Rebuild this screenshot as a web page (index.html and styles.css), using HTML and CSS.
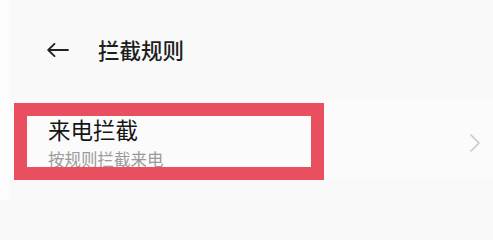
FILE: index.html
```html
<!DOCTYPE html>
<html lang="zh">
<head>
<meta charset="utf-8">
<link rel="stylesheet" href="styles.css">
</head>
<body>
  <header class="topbar">
    <svg class="back" width="22" height="14" viewBox="0 0 22 14">
      <path d="M21 7H1.2M7.5 0.8L1.2 7l6.3 6.2" fill="none" stroke="#222" stroke-width="1.8" stroke-linecap="round" stroke-linejoin="round"/>
    </svg>
    <h1 class="title">拦截规则</h1>
  </header>
  <div class="item">
    <div class="texts">
      <div class="item-title">来电拦截</div>
      <div class="item-sub">按规则拦截来电</div>
    </div>
    <svg class="chev" width="10" height="18" viewBox="0 0 10 18">
      <path d="M1 1l8 8-8 8" fill="none" stroke="#c6c6c6" stroke-width="1.5" stroke-linecap="round" stroke-linejoin="round"/>
    </svg>
    <div class="highlight"></div>
  </div>
</body>
</html>
```
FILE: styles.css
```css
html, body {
  margin: 0;
  padding: 0;
}
body {
  width: 493px;
  height: 200px;
  background: #f9f9f9;
  font-family: "Noto Sans CJK SC", "Noto Sans", sans-serif;
  overflow: hidden;
  border-left: 9px solid #fdfdfd;
  box-sizing: border-box;
}
.topbar {
  height: 100px;
  display: flex;
  align-items: center;
  padding-left: 38px;
}
.back {
  display: block;
}
.title {
  margin: 0 0 0 29px;
  font-size: 21.5px;
  font-weight: 500;
  color: #1e1e1e;
  line-height: 26px;
}
.item {
  position: relative;
  display: flex;
  justify-content: space-between;
  align-items: flex-start;
  padding: 16px 13px 9px 39px;
  background: #fbfbfb;
}
.item-title {
  font-size: 22.5px;
  line-height: 26px;
  color: #151515;
}
.item-sub {
  margin-top: 8px;
  font-size: 16.5px;
  line-height: 19px;
  color: #9a9a9a;
}
.chev {
  align-self: center;
  display: block;
}
.highlight {
  position: absolute;
  left: 5px;
  top: 3px;
  width: 310px;
  height: 77px;
  box-sizing: border-box;
  border: 13px solid #e8505f;
}
```
